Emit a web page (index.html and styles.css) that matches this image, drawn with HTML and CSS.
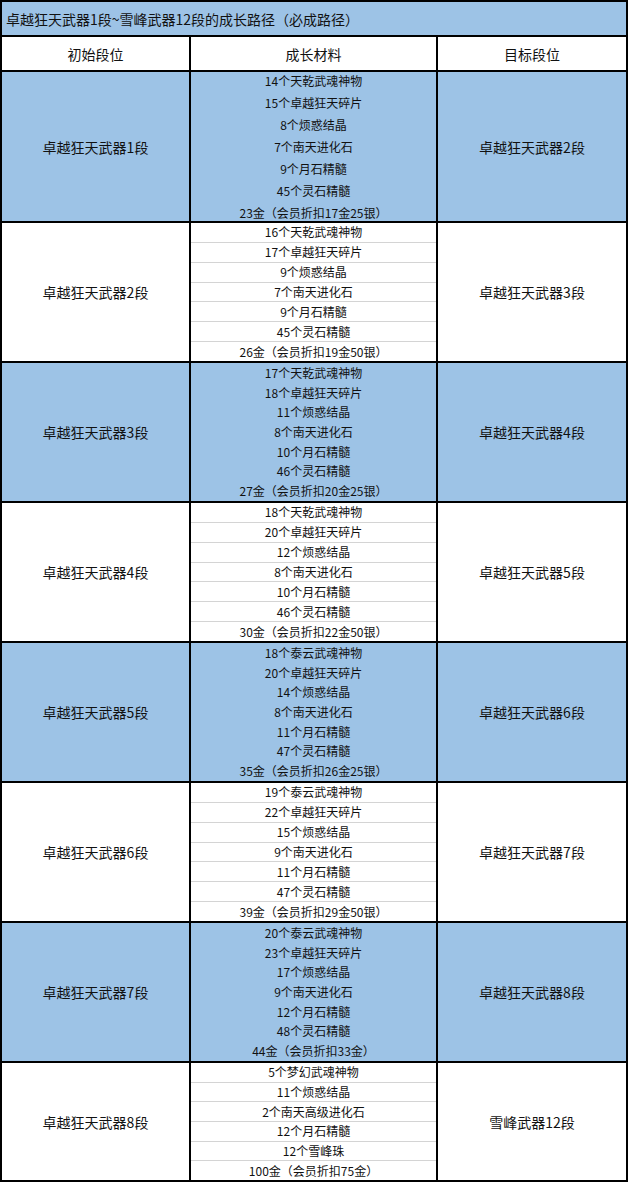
FILE: index.html
```html
<!DOCTYPE html>
<html lang="zh">
<head>
<meta charset="utf-8">
<title>成长路径</title>
<link rel="stylesheet" href="styles.css">
</head>
<body>
<div class="sheet">
  <div class="cell title">卓越狂天武器1段~雪峰武器12段的成长路径（必成路径）</div>
  <div class="cell head">初始段位</div>
  <div class="cell head">成长材料</div>
  <div class="cell head">目标段位</div>

  <div class="cell rank blue g-first">卓越狂天武器1段</div>
  <div class="cell mats spread blue g-first">
    <div class="mat">14个天乾武魂神物</div>
    <div class="mat">15个卓越狂天碎片</div>
    <div class="mat">8个烦惑结晶</div>
    <div class="mat">7个南天进化石</div>
    <div class="mat">9个月石精髓</div>
    <div class="mat">45个灵石精髓</div>
    <div class="mat">23金（会员折扣17金25银）</div>
  </div>
  <div class="cell rank blue g-first">卓越狂天武器2段</div>

  <div class="cell rank g-mid">卓越狂天武器2段</div>
  <div class="cell mats lined g-mid">
    <div class="mat">16个天乾武魂神物</div>
    <div class="mat">17个卓越狂天碎片</div>
    <div class="mat">9个烦惑结晶</div>
    <div class="mat">7个南天进化石</div>
    <div class="mat">9个月石精髓</div>
    <div class="mat">45个灵石精髓</div>
    <div class="mat">26金（会员折扣19金50银）</div>
  </div>
  <div class="cell rank g-mid">卓越狂天武器3段</div>

  <div class="cell rank blue g-mid">卓越狂天武器3段</div>
  <div class="cell mats blue g-mid">
    <div class="mat">17个天乾武魂神物</div>
    <div class="mat">18个卓越狂天碎片</div>
    <div class="mat">11个烦惑结晶</div>
    <div class="mat">8个南天进化石</div>
    <div class="mat">10个月石精髓</div>
    <div class="mat">46个灵石精髓</div>
    <div class="mat">27金（会员折扣20金25银）</div>
  </div>
  <div class="cell rank blue g-mid">卓越狂天武器4段</div>

  <div class="cell rank g-mid">卓越狂天武器4段</div>
  <div class="cell mats lined g-mid">
    <div class="mat">18个天乾武魂神物</div>
    <div class="mat">20个卓越狂天碎片</div>
    <div class="mat">12个烦惑结晶</div>
    <div class="mat">8个南天进化石</div>
    <div class="mat">10个月石精髓</div>
    <div class="mat">46个灵石精髓</div>
    <div class="mat">30金（会员折扣22金50银）</div>
  </div>
  <div class="cell rank g-mid">卓越狂天武器5段</div>

  <div class="cell rank blue g-mid">卓越狂天武器5段</div>
  <div class="cell mats blue g-mid">
    <div class="mat">18个泰云武魂神物</div>
    <div class="mat">20个卓越狂天碎片</div>
    <div class="mat">14个烦惑结晶</div>
    <div class="mat">8个南天进化石</div>
    <div class="mat">11个月石精髓</div>
    <div class="mat">47个灵石精髓</div>
    <div class="mat">35金（会员折扣26金25银）</div>
  </div>
  <div class="cell rank blue g-mid">卓越狂天武器6段</div>

  <div class="cell rank g-mid">卓越狂天武器6段</div>
  <div class="cell mats lined g-mid">
    <div class="mat">19个泰云武魂神物</div>
    <div class="mat">22个卓越狂天碎片</div>
    <div class="mat">15个烦惑结晶</div>
    <div class="mat">9个南天进化石</div>
    <div class="mat">11个月石精髓</div>
    <div class="mat">47个灵石精髓</div>
    <div class="mat">39金（会员折扣29金50银）</div>
  </div>
  <div class="cell rank g-mid">卓越狂天武器7段</div>

  <div class="cell rank blue g-mid">卓越狂天武器7段</div>
  <div class="cell mats blue g-mid">
    <div class="mat">20个泰云武魂神物</div>
    <div class="mat">23个卓越狂天碎片</div>
    <div class="mat">17个烦惑结晶</div>
    <div class="mat">9个南天进化石</div>
    <div class="mat">12个月石精髓</div>
    <div class="mat">48个灵石精髓</div>
    <div class="mat">44金（会员折扣33金）</div>
  </div>
  <div class="cell rank blue g-mid">卓越狂天武器8段</div>

  <div class="cell rank g-last">卓越狂天武器8段</div>
  <div class="cell mats lined g-last">
    <div class="mat">5个梦幻武魂神物</div>
    <div class="mat">11个烦惑结晶</div>
    <div class="mat">2个南天高级进化石</div>
    <div class="mat">12个月石精髓</div>
    <div class="mat">12个雪峰珠</div>
    <div class="mat">100金（会员折扣75金）</div>
  </div>
  <div class="cell rank g-last">雪峰武器12段</div>
</div>
</body>
</html>
```

FILE: styles.css
```css
html, body {
  margin: 0;
  padding: 0;
  background: #ffffff;
}

body {
  font-family: "Noto Sans CJK SC", "Noto Sans", sans-serif;
  color: #111111;
}

.sheet {
  display: grid;
  grid-template-columns: 189px 247px 190px;
  width: 626px;
  border-left: 2px solid #000;
  border-top: 2px solid #000;
}

.cell {
  box-sizing: border-box;
  border-right: 2px solid #000;
  border-bottom: 2px solid #000;
  background: #ffffff;
}

.blue {
  background: #9dc3e6;
}

.title {
  grid-column: 1 / 4;
  height: 35px;
  background: #9dc3e6;
  display: flex;
  align-items: center;
  padding-left: 4px;
  font-size: 14px;
  line-height: 1;
}

.head {
  height: 35px;
  display: flex;
  align-items: center;
  justify-content: center;
  font-size: 14px;
  line-height: 1;
}

.g-first { height: 151px; }
.g-mid { height: 140px; }
.g-last { height: 119px; }

.rank {
  display: flex;
  align-items: center;
  justify-content: center;
  font-size: 14px;
  line-height: 1;
}

.mats {
  display: flex;
  flex-direction: column;
}

.mat {
  flex: 1;
  display: flex;
  align-items: center;
  justify-content: center;
  font-size: 12px;
  line-height: 1;
}

.spread {
  justify-content: space-between;
}

.spread .mat {
  flex: none;
  height: 17px;
}

.lined .mat {
  border-bottom: 1px solid #d4d4d4;
}

.lined .mat:last-child {
  border-bottom: none;
}
```
